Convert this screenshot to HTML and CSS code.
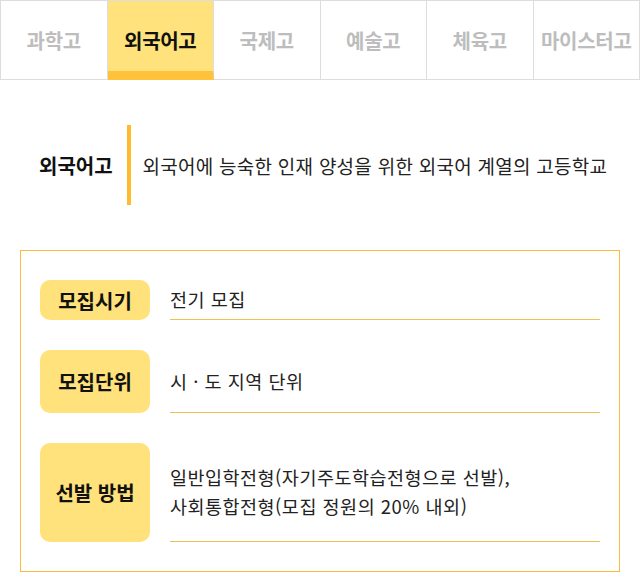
FILE: index.html
```html
<!DOCTYPE html>
<html lang="ko">
<head>
<meta charset="utf-8">
<link rel="stylesheet" href="styles.css">
</head>
<body>
<nav class="tabs">
  <a class="tab">과학고</a>
  <a class="tab active">외국어고</a>
  <a class="tab">국제고</a>
  <a class="tab">예술고</a>
  <a class="tab">체육고</a>
  <a class="tab">마이스터고</a>
</nav>
<section class="intro">
  <h2 class="intro-title">외국어고</h2>
  <span class="intro-bar"></span>
  <p class="intro-desc">외국어에 능숙한 인재 양성을 위한 외국어 계열의 고등학교</p>
</section>
<section class="info">
  <div class="row">
    <div class="label">모집시기</div>
    <div class="value">전기 모집</div>
  </div>
  <div class="row">
    <div class="label tall">모집단위</div>
    <div class="value">시 · 도 지역 단위</div>
  </div>
  <div class="row">
    <div class="label taller">선발 방법</div>
    <div class="value">일반입학전형(자기주도학습전형으로 선발),<br>사회통합전형(모집 정원의 20% 내외)</div>
  </div>
</section>
</body>
</html>
```
FILE: styles.css
```css
* { box-sizing: border-box; }
html, body { margin: 0; padding: 0; background: #fff; }
body {
  font-family: "Noto Sans CJK KR", "Noto Sans", sans-serif;
  color: #222;
  width: 640px;
}
.tabs {
  display: flex;
  height: 80px;
  border-top: 1px solid #ddd;
  border-left: 1px solid #ddd;
  border-bottom: 1px solid #ddd;
}
.tab {
  flex: 1;
  display: flex;
  align-items: center;
  justify-content: center;
  border-right: 1px solid #ddd;
  font-size: 20px;
  font-weight: 700;
  color: #bdbdbd;
  letter-spacing: -0.3px;
}
.tab.active {
  background: #ffe27b;
  color: #111;
  border-bottom: 9px solid #ffc23a;
  padding-top: 9px;
  margin-bottom: -1px;
}
.intro {
  display: flex;
  align-items: center;
  padding: 45px 0 45px 39px;
}
.intro-title {
  margin: 0;
  font-size: 20px;
  font-weight: 700;
  color: #111;
}
.intro-bar {
  width: 4px;
  height: 80px;
  background: #fdbb2e;
  margin: 0 12px 0 14px;
}
.intro-desc {
  margin: 0;
  font-size: 19px;
  color: #222;
  letter-spacing: 0.25px;
}
.info {
  margin: 0 20px;
  border: 1px solid #f8bd3b;
  padding: 29px 19px 29px 19px;
  display: flex;
  flex-direction: column;
  gap: 30px;
}
.row {
  display: flex;
  align-items: stretch;
  gap: 20px;
}
.label {
  width: 110px;
  flex: none;
  height: 40px;
  border-radius: 10px;
  background: #ffe27b;
  display: flex;
  align-items: center;
  justify-content: center;
  font-size: 20px;
  font-weight: 700;
  color: #111;
}
.label.tall { height: 63px; }
.label.taller { height: 99px; }
.value {
  flex: 1;
  display: flex;
  align-items: center;
  border-bottom: 1px solid #f1c04f;
  font-size: 18.5px;
  line-height: 29px;
  color: #222;
  letter-spacing: 0.5px;
}
```
